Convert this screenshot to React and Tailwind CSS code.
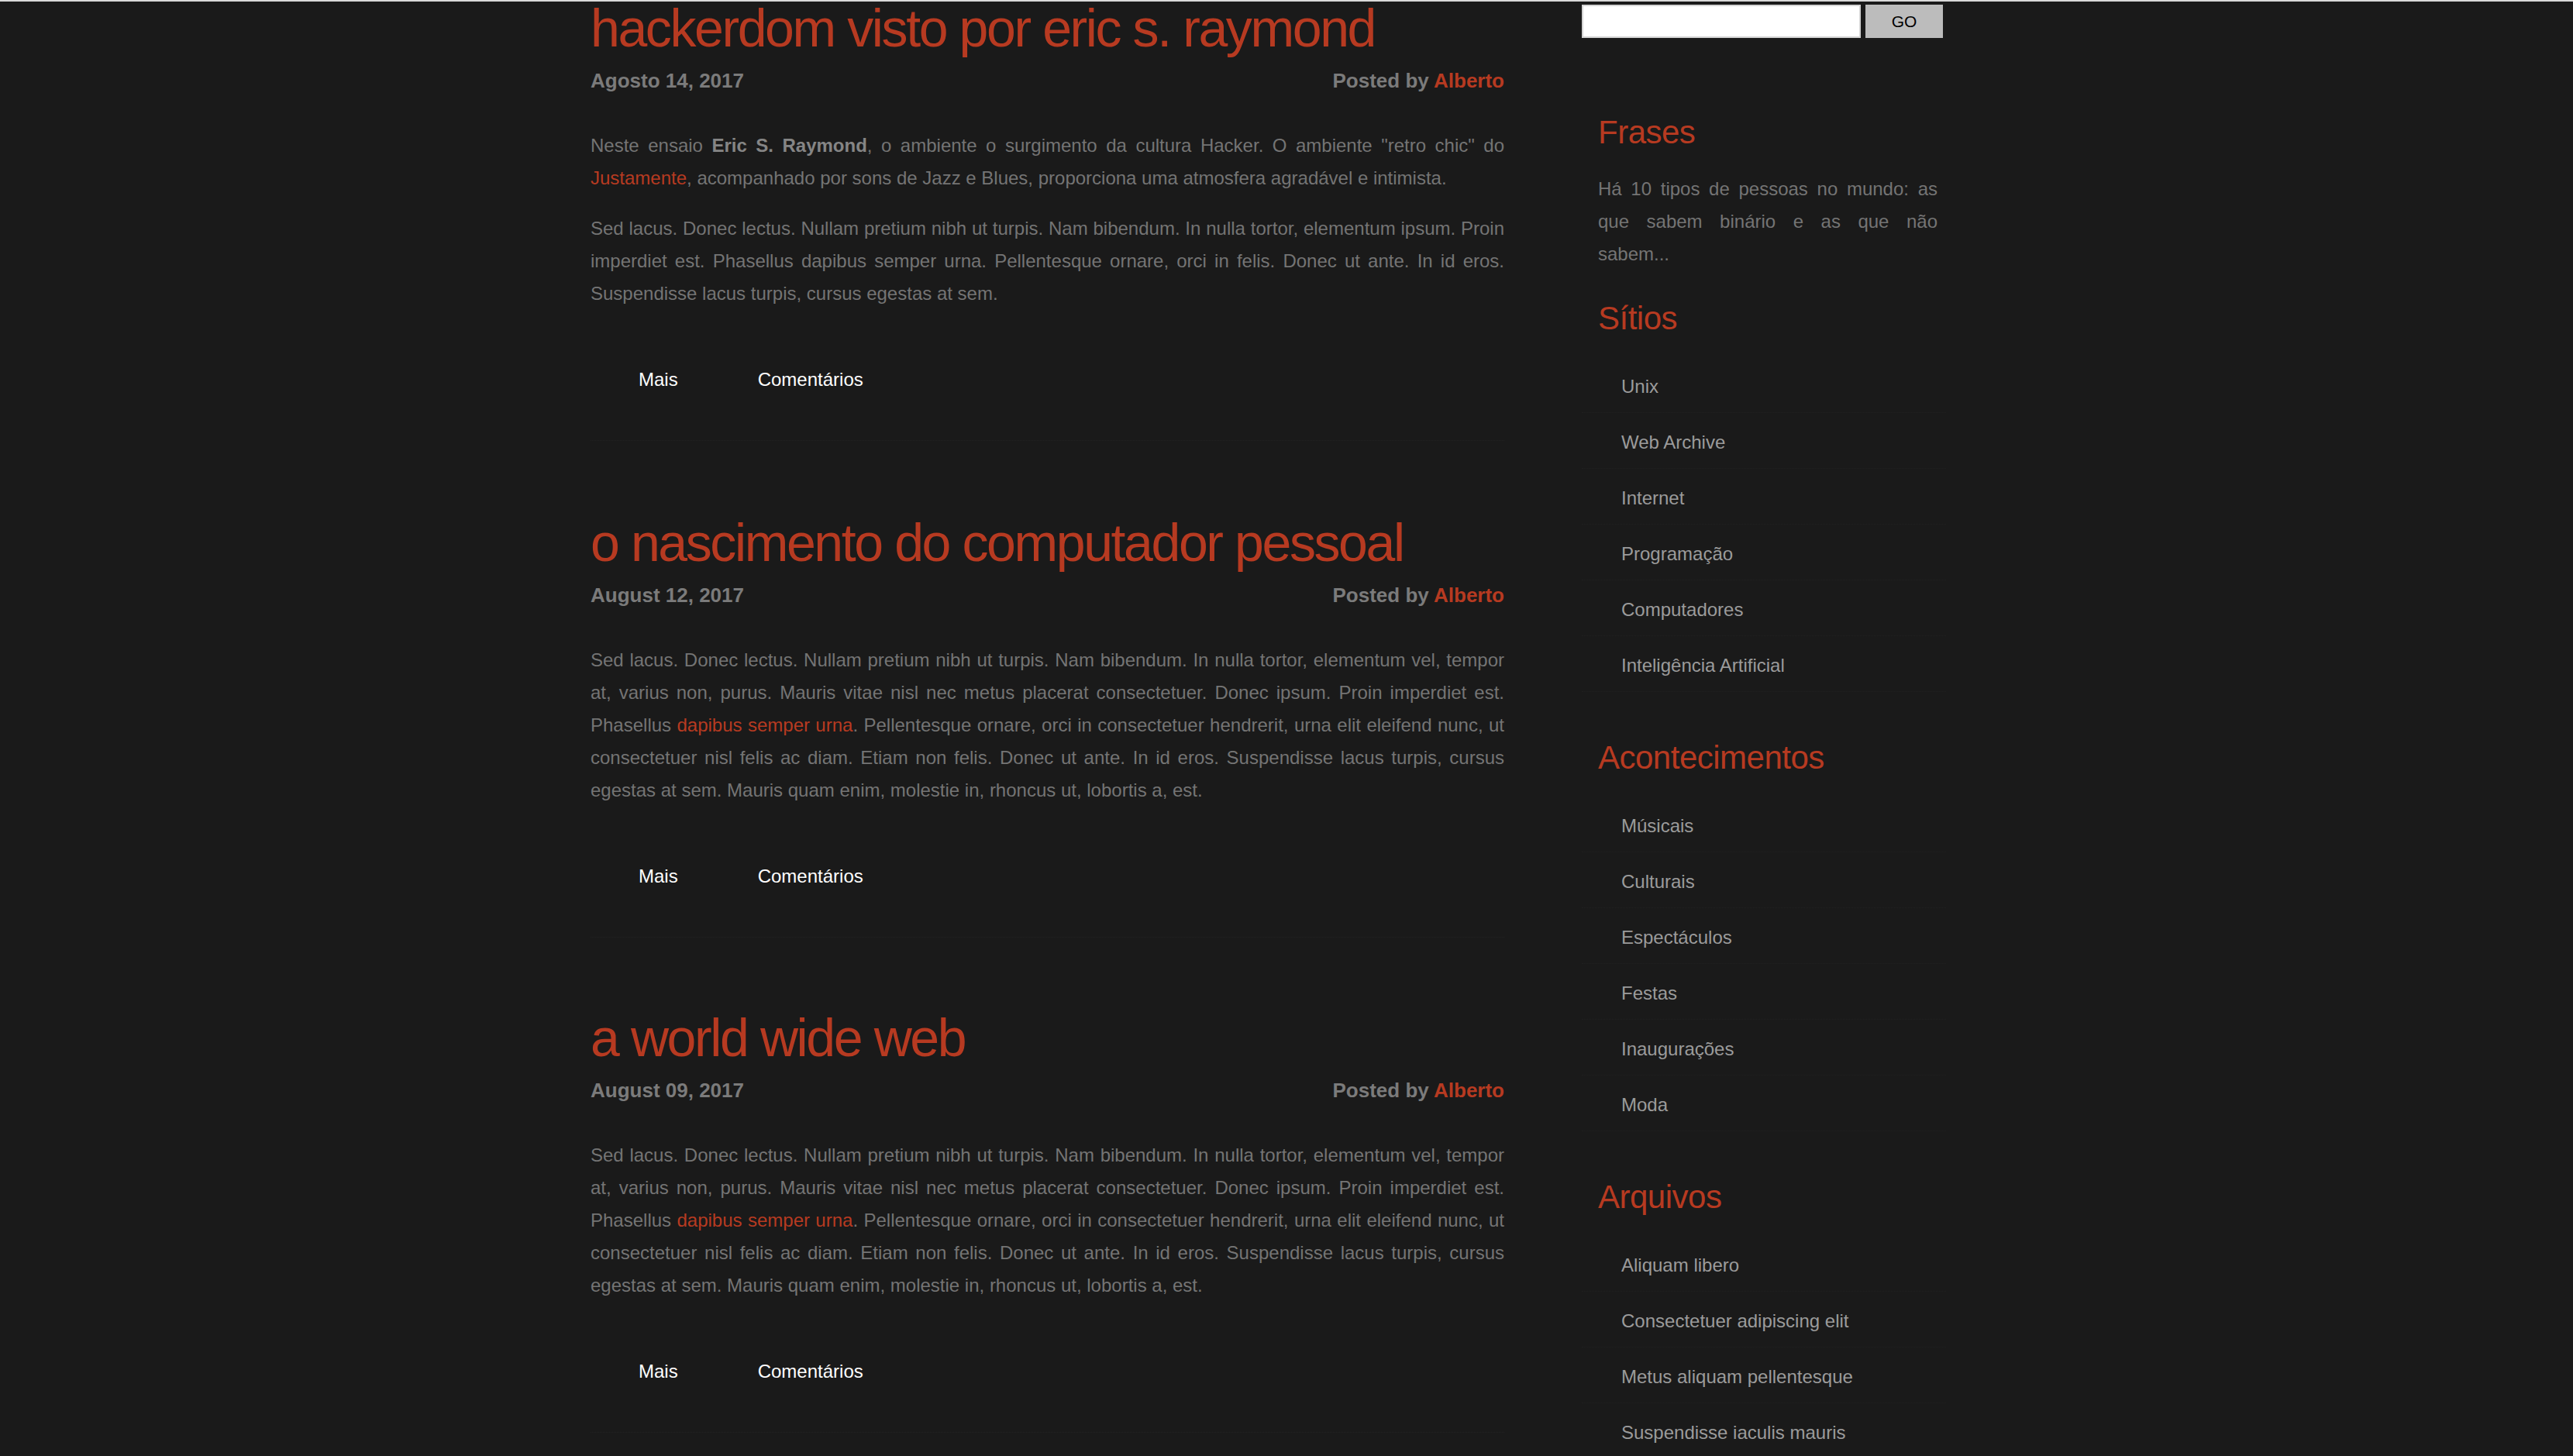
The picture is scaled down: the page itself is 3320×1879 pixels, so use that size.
const POSTS = [
  {
    title: "hackerdom visto por eric s. raymond",
    date: "Agosto 14, 2017",
    gap: "",
    body: [
      <>
        Neste ensaio <b className="text-[#858585]">Eric S. Raymond</b>, o ambiente o surgimento da
        cultura Hacker. O ambiente "retro chic" do <a className="text-[#b73a21]">Justamente</a>,
        acompanhado por sons de Jazz e Blues, proporciona uma atmosfera agradável e intimista.
      </>,
      <>
        Sed lacus. Donec lectus. Nullam pretium nibh ut turpis. Nam bibendum. In nulla tortor,
        elementum ipsum. Proin imperdiet est. Phasellus dapibus semper urna. Pellentesque ornare,
        orci in felis. Donec ut ante. In id eros. Suspendisse lacus turpis, cursus egestas at sem.
      </>,
    ],
  },
  {
    title: "o nascimento do computador pessoal",
    date: "August 12, 2017",
    gap: "mt-[95px]",
    body: "lorem",
  },
  { title: "a world wide web", date: "August 09, 2017", gap: "mt-[93px]", body: "lorem" },
];

function LoremBody() {
  return (
    <p>
      Sed lacus. Donec lectus. Nullam pretium nibh ut turpis. Nam bibendum. In nulla tortor,
      elementum vel, tempor at, varius non, purus. Mauris vitae nisl nec metus placerat
      consectetuer. Donec ipsum. Proin imperdiet est. Phasellus{" "}
      <a className="text-[#b73a21]">dapibus semper urna</a>. Pellentesque ornare, orci in
      consectetuer hendrerit, urna elit eleifend nunc, ut consectetuer nisl felis ac diam. Etiam non
      felis. Donec ut ante. In id eros. Suspendisse lacus turpis, cursus egestas at sem. Mauris quam
      enim, molestie in, rhoncus ut, lobortis a, est.
    </p>
  );
}

function Post({ post }) {
  return (
    <div className={`pb-[62px] border-b border-dotted border-[#222222] ${post.gap}`}>
      <h2 className="text-[68px] leading-[72px] tracking-[-2.4px] text-[#b73a21] whitespace-nowrap">
        {post.title}
      </h2>
      <div className="mt-[16px] flex justify-between text-[26px] leading-[32px] font-bold text-[#7b7b7b]">
        <span>{post.date}</span>
        <span>
          Posted by <a className="text-[#b73a21]">Alberto</a>
        </span>
      </div>
      <div className="mt-[47px] text-[24px] leading-[42px] text-justify text-[#747474] flex flex-col gap-[23px]">
        {post.body === "lorem" ? <LoremBody /> : post.body.map((b, i) => <p key={i}>{b}</p>)}
      </div>
      <div className="mt-[74px] flex text-[24px] leading-[32px] text-white">
        <a className="ml-[62px]">Mais</a>
        <a className="ml-[103px]">Comentários</a>
      </div>
    </div>
  );
}

function LinkList({ items }) {
  return (
    <ul className="mt-[26px]">
      {items.map((item) => (
        <li
          key={item}
          className="pl-[51px] pt-[22px] pb-[17px] text-[24px] leading-[32px] text-[#9b9b9b] border-b border-dotted border-[#202020]"
        >
          {item}
        </li>
      ))}
    </ul>
  );
}

function Heading({ children, className = "" }) {
  return (
    <h3 className={`pl-[21px] text-[42px] leading-[48px] tracking-[-0.5px] text-[#b73a21] ${className}`}>
      {children}
    </h3>
  );
}

export default function App() {
  return (
    <div className="relative h-[1879px] bg-[#1a1a1a] font-['Liberation_Sans',Arial,Helvetica,sans-serif] overflow-hidden">
      <div className="absolute top-0 left-0 right-0 h-[2px] bg-[#d9d9d9]" />
      <div className="absolute top-0 left-[413px] w-[120px] h-[6px] overflow-hidden">
        <div className="-mt-[26px] text-[30px] leading-[30px] text-[#cfcfcf] tracking-[-1px]">
          nascimento
        </div>
      </div>

      <div className="flex pl-[762px]">
        <main className="w-[1179px] shrink-0">
          {POSTS.map((p) => (
            <Post key={p.title} post={p} />
          ))}
        </main>

        <aside className="ml-[100px] w-[470px] shrink-0">
          <form className="mt-[6px] flex" onSubmit={(e) => e.preventDefault()}>
            <input
              type="text"
              className="w-[360px] h-[43px] bg-white border-2 border-[#d4d4d4] outline-none"
            />
            <button
              type="submit"
              className="ml-[6px] w-[100px] h-[43px] bg-[#bcbcbc] text-black text-[21px]"
            >
              GO
            </button>
          </form>

          <Heading className="mt-[98px]">Frases</Heading>
          <p className="mt-[28px] pl-[21px] w-[459px] text-[24px] leading-[42px] text-justify text-[#747474]">
            Há 10 tipos de pessoas no mundo: as que sabem binário e as que não{" "}
            <span className="inline-block w-[120px]">sabem...</span>
          </p>

          <Heading className="mt-[38px]">Sítios</Heading>
          <LinkList
            items={[
              "Unix",
              "Web Archive",
              "Internet",
              "Programação",
              "Computadores",
              "Inteligência Artificial",
            ]}
          />

          <Heading className="mt-[61px]">Acontecimentos</Heading>
          <LinkList
            items={["Músicais", "Culturais", "Espectáculos", "Festas", "Inaugurações", "Moda"]}
          />

          <Heading className="mt-[61px]">Arquivos</Heading>
          <LinkList
            items={[
              "Aliquam libero",
              "Consectetuer adipiscing elit",
              "Metus aliquam pellentesque",
              "Suspendisse iaculis mauris",
            ]}
          />
        </aside>
      </div>
    </div>
  );
}
